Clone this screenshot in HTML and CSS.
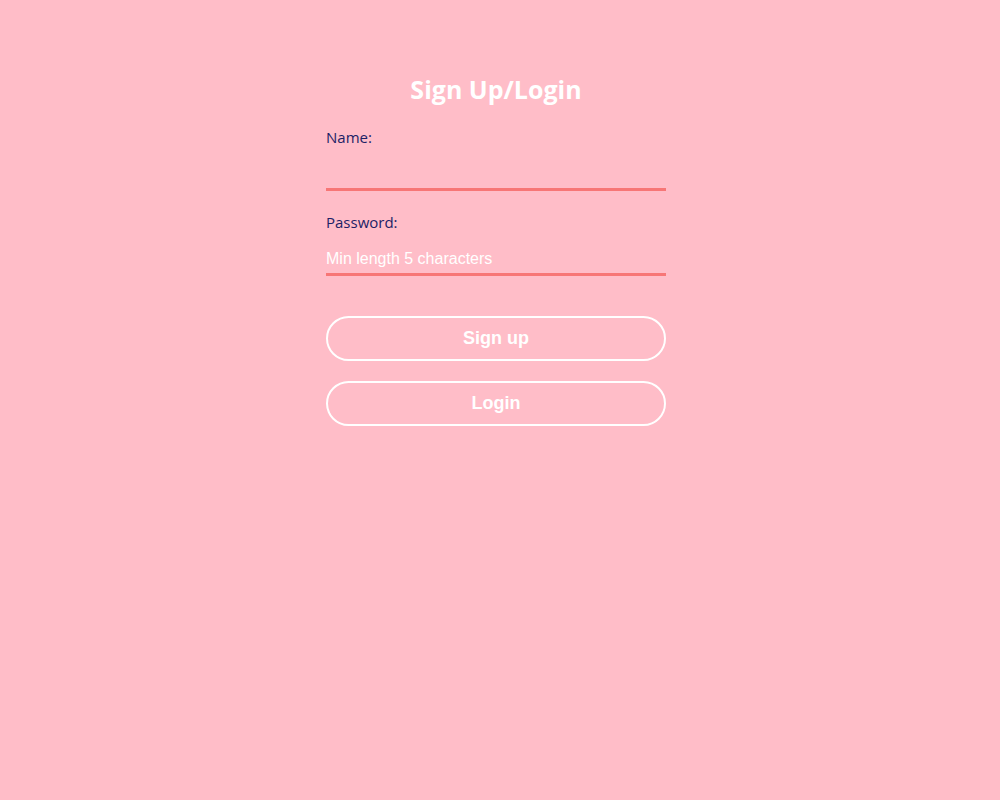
FILE: index.html
```html
<!DOCTYPE html>
<html lang="en">
<head>
    <meta charset="UTF-8">
    <meta name="viewport" content="width=device-width, initial-scale=1.0">
    <title>Sign Up/Login</title>
    <link rel="stylesheet" href="styles.css">
</head>
<body>
    <div class="container">
        <h1>Sign Up/Login</h1>
        <form class="auth-form">
            <label for="name-input">Name:</label>
            <input type="text" id="name-input">
            <label for="password-input" class="second">Password:</label>
            <input type="password" id="password-input" placeholder="Min length 5 characters">
            <button type="button" class="btn first-btn">Sign up</button>
            <button type="button" class="btn">Login</button>
        </form>
    </div>
</body>
</html>
```

FILE: styles.css
```css
body {
    font-family: "Open Sans", sans-serif;
    background: #ffbdc8;
    margin: 0 8px 0 0;
    padding: 0;
}
.container {
    width: 340px;
    margin: 0 auto;
    padding-top: 73px;
}
h1 {
    text-align: center;
    color: #fff;
    font-size: 25px;
    line-height: 32px;
    font-weight: 700;
    margin: 0 0 22px 0;
}
.auth-form label {
    display: block;
    font-size: 15px;
    line-height: 20px;
    color: #1d2266;
}
.auth-form label.second {
    margin-top: 21px;
}
.auth-form input {
    display: block;
    width: 100%;
    box-sizing: border-box;
    height: 42px;
    margin-top: 2px;
    padding: 10px 0 0 0;
    background: transparent;
    border: none;
    border-bottom: 3px solid #f77676;
    outline: none;
    font-family: "Liberation Sans", Arial, sans-serif;
    font-size: 16px;
    color: #fff;
}
.auth-form input::placeholder {
    color: #fff;
    opacity: 1;
}
.btn {
    display: block;
    width: 100%;
    height: 45px;
    margin-top: 20px;
    background: transparent;
    border: 2px solid #fff;
    border-radius: 23px;
    color: #fff;
    font-family: "Liberation Sans", Arial, sans-serif;
    font-size: 18px;
    font-weight: 700;
    cursor: pointer;
}
.btn.first-btn {
    margin-top: 40px;
}
```
